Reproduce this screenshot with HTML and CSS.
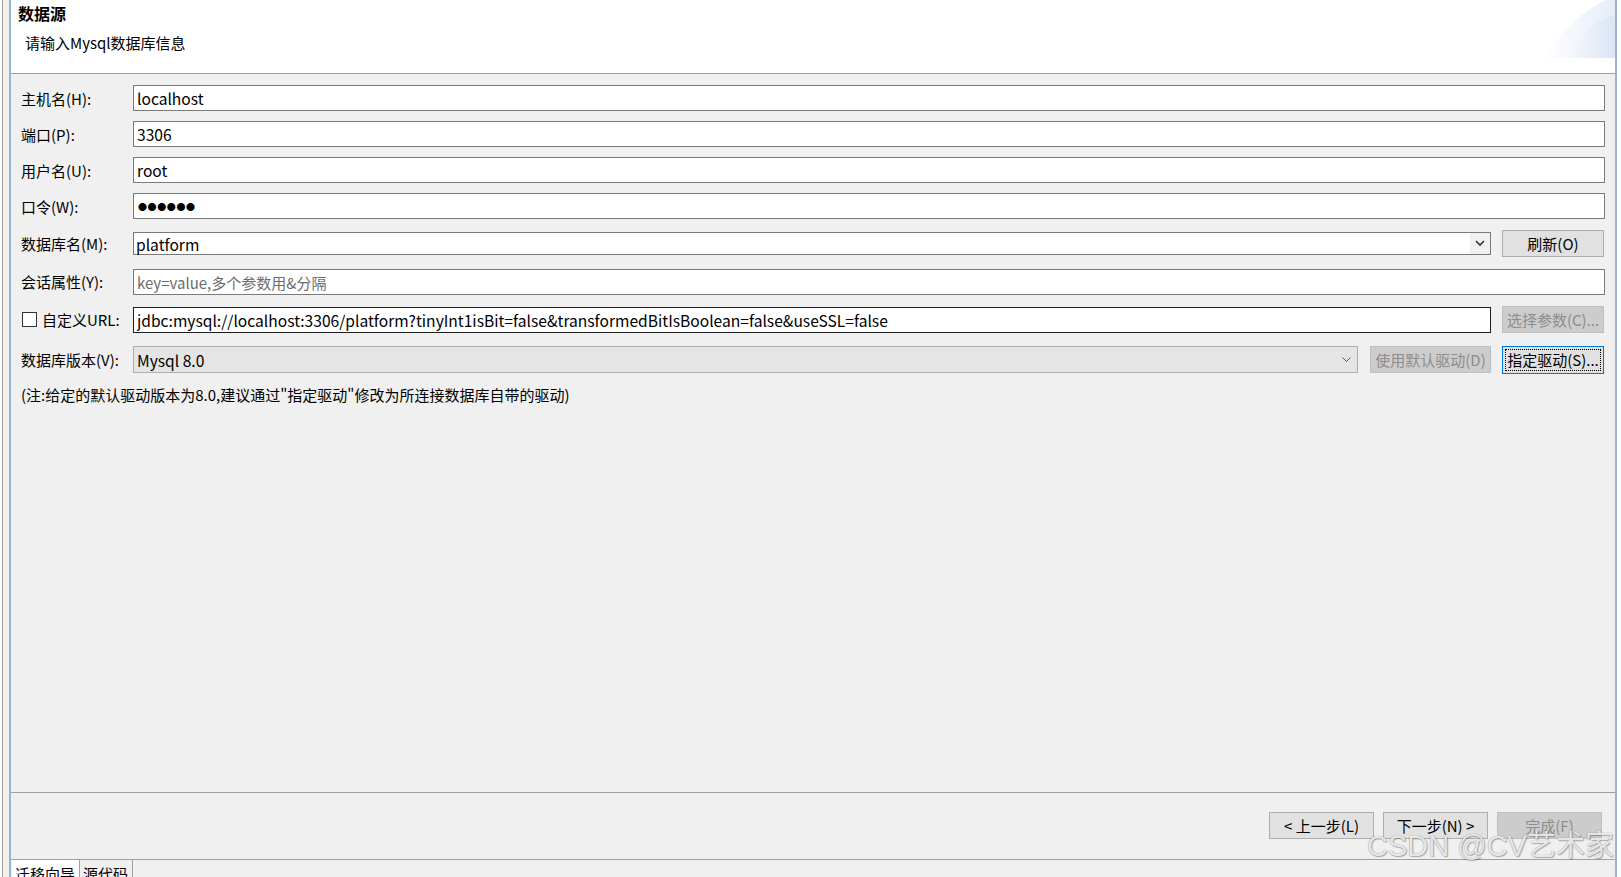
FILE: index.html
```html
<!DOCTYPE html>
<html lang="zh-CN">
<head>
  <meta charset="UTF-8" />
  <title>数据源</title>
  <link rel="stylesheet" href="styles.css">
</head>
<body>
  <div class="shell">
    <div class="edge-left"></div>

    <div class="window">
      <!-- 顶部标题区 -->
      <div class="header">
        <div class="header-text">
          <div class="title">数据源</div>
          <div class="subtitle">请输入Mysql数据库信息</div>
        </div>
        <svg class="header-deco" viewBox="0 0 72 58" xmlns="http://www.w3.org/2000/svg">
          <defs>
            <linearGradient id="g1" x1="0" y1="0" x2="1" y2="0">
              <stop offset="0" stop-color="#ffffff"/>
              <stop offset="1" stop-color="#e6ecf8"/>
            </linearGradient>
            <linearGradient id="g2" x1="0" y1="0" x2="1" y2="0">
              <stop offset="0" stop-color="#f4f7fc"/>
              <stop offset="1" stop-color="#dce4f5"/>
            </linearGradient>
          </defs>
          <path d="M0 58 C18 32 40 10 64 0 L72 0 L72 58 Z" fill="url(#g1)"/>
          <path d="M26 58 C36 36 52 20 72 15 L72 58 Z" fill="url(#g2)"/>
        </svg>
      </div>

      <!-- 表单 -->
      <div class="form">
        <div class="row">
          <div class="label">主机名(H):</div>
          <input class="field" type="text" value="localhost">
        </div>
        <div class="row">
          <div class="label">端口(P):</div>
          <input class="field" type="text" value="3306">
        </div>
        <div class="row">
          <div class="label">用户名(U):</div>
          <input class="field" type="text" value="root">
        </div>
        <div class="row">
          <div class="label">口令(W):</div>
          <div class="field field-pwd">●●●●●●</div>
        </div>
        <div class="row row-db">
          <div class="label">数据库名(M):</div>
          <div class="combo">
            <span class="combo-text">platform</span>
            <span class="combo-arrow">
              <svg width="10" height="7" viewBox="0 0 10 7"><path d="M1 1 L5 5 L9 1" fill="none" stroke="#333" stroke-width="1.6"/></svg>
            </span>
          </div>
          <button class="btn btn-side">刷新(O)</button>
        </div>
        <div class="row row-attr">
          <div class="label">会话属性(Y):</div>
          <input class="field" type="text" placeholder="key=value,多个参数用&amp;分隔">
        </div>
        <div class="row row-url">
          <label class="label check-label"><span class="check"></span>自定义URL:</label>
          <input class="field field-dark" type="text" value="jdbc:mysql://localhost:3306/platform?tinyInt1isBit=false&amp;transformedBitIsBoolean=false&amp;useSSL=false">
          <button class="btn btn-side btn-disabled">选择参数(C)...</button>
        </div>
        <div class="row row-ver">
          <div class="label">数据库版本(V):</div>
          <div class="combo combo-ro">
            <span class="combo-text">Mysql 8.0</span>
            <span class="combo-arrow">
              <svg width="9" height="5" viewBox="0 0 9 5"><path d="M0.5 0.5 L4.5 4.5 L8.5 0.5" fill="none" stroke="#555" stroke-width="1"/></svg>
            </span>
          </div>
          <button class="btn btn-mid btn-disabled">使用默认驱动(D)</button>
          <button class="btn btn-side btn-focus"><span class="focus-ring">指定驱动(S)...</span></button>
        </div>
        <div class="note">(注:给定的默认驱动版本为8.0,建议通过"指定驱动"修改为所连接数据库自带的驱动)</div>
      </div>

      <!-- 底部按钮 -->
      <div class="footer">
        <button class="btn btn-nav">&lt; 上一步(L)</button>
        <button class="btn btn-nav">下一步(N) &gt;</button>
        <button class="btn btn-nav btn-disabled">完成(F)</button>
      </div>

      <!-- 页签 -->
      <div class="tabs">
        <div class="tab tab-active">迁移向导</div>
        <div class="tab">源代码</div>
      </div>
    </div>
  </div>

  <div class="watermark">CSDN @CV艺术家</div>
</body>
</html>
```

FILE: styles.css
```css
/* 通用 */
body {
  margin: 0;
  background: #fff;
  font-family: "Noto Sans CJK SC", "Noto Sans", sans-serif;
  font-size: 15px;
  color: #000;
  overflow: hidden;
  width: 1621px;
  height: 877px;
}

.shell {
  display: flex;
  height: 877px;
}
.edge-left {
  width: 6px;
  margin-left: 2px;
  border-left: 1px solid #a0a0a0;
  background: #f0f0f0;
}
.window {
  width: 1604px;
  border-left: 2px solid #99b4d1;
  border-right: 2px solid #99b4d1;
  display: flex;
  flex-direction: column;
  background: #f0f0f0;
}

/* 顶部标题区 */
.header {
  height: 73px;
  flex: none;
  background: #fff;
  border-bottom: 1px solid #a0a0a0;
  display: flex;
  justify-content: space-between;
}
.title {
  padding: 2px 0 0 7px;
  font-size: 16px;
  font-weight: bold;
  line-height: 22px;
}
.subtitle {
  margin-top: 9px;
  padding-left: 14px;
  line-height: 20px;
}
.header-deco {
  width: 72px;
  height: 58px;
  align-self: flex-start;
}

/* 表单 */
.form {
  flex: 1;
  padding: 6px 10px 0 10px;
}
.row {
  display: flex;
  align-items: center;
  height: 36px;
}
.row-db   { height: 39px; }
.row-attr { height: 37px; }
.row-url  { height: 39px; }
.row-ver  { height: 41px; }

.label {
  width: 112px;
  flex: none;
  white-space: nowrap;
}
.field {
  flex: 1;
  min-width: 0;
  height: 26px;
  box-sizing: border-box;
  margin: 0;
  padding: 0 3px;
  border: 1px solid #7a7a7a;
  background: #fff;
  font-family: inherit;
  font-size: 15.6px;
  color: #000;
  outline: none;
}
.field::placeholder {
  color: #6d6d6d;
  font-size: 15px;
}
.field-pwd {
  display: flex;
  align-items: center;
  font-size: 9px;
  letter-spacing: 0.6px;
  padding-left: 4px;
}
.field-dark {
  border-color: #1e1e1e;
}

.check-label {
  display: flex;
  align-items: center;
}
.check {
  width: 13px;
  height: 13px;
  border: 1px solid #333;
  background: #fff;
  margin: 0 5px 0 1px;
}

/* 下拉框 */
.combo {
  flex: 1;
  height: 23px;
  box-sizing: border-box;
  border: 1px solid #7a7a7a;
  background: #fff;
  display: flex;
  align-items: center;
  font-size: 15.6px;
}
.combo-text {
  flex: 1;
  padding-left: 2px;
}
.combo-arrow {
  width: 20px;
  height: 100%;
  background: #f0f0f0;
  display: flex;
  align-items: center;
  justify-content: center;
}
.combo-ro {
  height: 27px;
  background: #e5e5e5;
  border-color: #adadad;
}
.combo-ro .combo-text {
  padding-left: 3px;
}
.combo-ro .combo-arrow {
  background: transparent;
  width: 22px;
}

/* 按钮 */
.btn {
  height: 27px;
  box-sizing: border-box;
  border: 1px solid #adadad;
  background: #e1e1e1;
  font-family: inherit;
  font-size: 15px;
  color: #000;
  padding: 0;
  white-space: nowrap;
}
.btn-side {
  width: 102px;
  margin: 0 1px 0 11px;
  flex: none;
}
.btn-mid {
  width: 121px;
  margin-left: 12px;
  flex: none;
}
.btn-disabled {
  background: #cccccc;
  border-color: #bfbfbf;
  color: #8d8d8d;
}
.btn-focus {
  border-color: #0078d7;
  height: 28px;
  padding: 2px;
}
.focus-ring {
  display: block;
  height: 100%;
  box-sizing: border-box;
  border: 1px dotted #000;
  line-height: 20px;
}
.note {
  line-height: 30px;
}

/* 底部 */
.footer {
  flex: none;
  border-top: 1px solid #a0a0a0;
  box-sizing: border-box;
  height: 67px;
  display: flex;
  justify-content: flex-end;
  align-items: flex-start;
  padding: 19px 13px 0 0;
  gap: 9px;
}
.btn-nav {
  width: 105px;
}

.tabs {
  height: 17px;
  flex: none;
  border-top: 1px solid #a0a0a0;
  display: flex;
  overflow: hidden;
}
.tab {
  padding: 3px 4px 0 3px;
  line-height: 22px;
  border-right: 1px solid #a0a0a0;
  height: 30px;
}
.tab-active {
  background: #fff;
  margin-left: 1px;
}

/* 水印 */
.watermark {
  position: absolute;
  left: 1367px;
  top: 829px;
  font-family: "Liberation Sans", "Noto Sans CJK SC", sans-serif;
  font-size: 29px;
  line-height: 34px;
  color: rgba(255, 255, 255, 0.85);
  text-shadow: 0 0 1px rgba(0, 0, 0, 0.5), 1px 1px 1px rgba(0, 0, 0, 0.25);
  white-space: nowrap;
}
```
